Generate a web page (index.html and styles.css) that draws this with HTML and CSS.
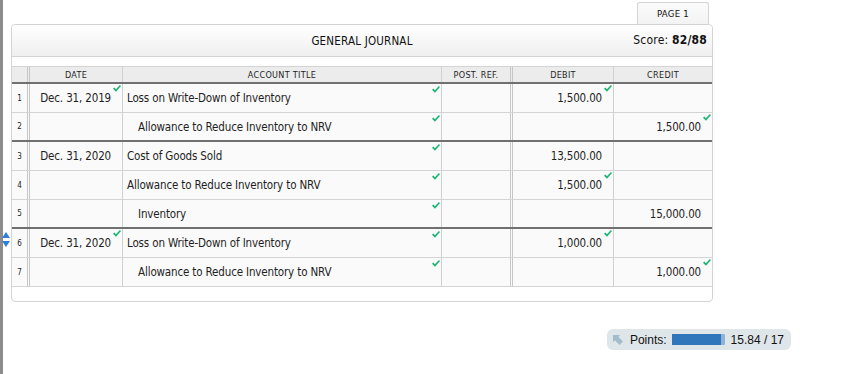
FILE: index.html
```html
<!DOCTYPE html>
<html>
<head>
<meta charset="utf-8">
<link rel="stylesheet" href="styles.css">
</head>
<body>
<div class="frame">
  <div class="tabs"><div class="tab">PAGE 1</div></div>
  <div class="panel">
    <div class="panel-head">
      <div class="title">GENERAL JOURNAL</div>
      <div class="score">Score: <b>82/88</b></div>
    </div>
    <div class="gap"></div>
    <div class="journal">
      <div class="row head">
        <div class="cell num"></div>
        <div class="cell date dbl">DATE</div>
        <div class="cell acct">ACCOUNT TITLE</div>
        <div class="cell ref">POST. REF.</div>
        <div class="cell amt dbl">DEBIT</div>
        <div class="cell amt">CREDIT</div>
      </div>

      <div class="row">
        <div class="cell num">1</div>
        <div class="cell date dbl">Dec. 31, 2019<svg class="chk" viewBox="0 0 8 7"><path d="M0 3.8 L1.4 2.6 L2.9 4.2 L6.9 0 L8 1 L3 6.8 Z"/></svg></div>
        <div class="cell acct">Loss on Write-Down of Inventory<svg class="chk" viewBox="0 0 8 7"><path d="M0 3.8 L1.4 2.6 L2.9 4.2 L6.9 0 L8 1 L3 6.8 Z"/></svg></div>
        <div class="cell ref"></div>
        <div class="cell amt dbl">1,500.00<svg class="chk" viewBox="0 0 8 7"><path d="M0 3.8 L1.4 2.6 L2.9 4.2 L6.9 0 L8 1 L3 6.8 Z"/></svg></div>
        <div class="cell amt"></div>
      </div>
      <div class="row grp-end">
        <div class="cell num">2</div>
        <div class="cell date dbl"></div>
        <div class="cell acct ind">Allowance to Reduce Inventory to NRV<svg class="chk" viewBox="0 0 8 7"><path d="M0 3.8 L1.4 2.6 L2.9 4.2 L6.9 0 L8 1 L3 6.8 Z"/></svg></div>
        <div class="cell ref"></div>
        <div class="cell amt dbl"></div>
        <div class="cell amt">1,500.00<svg class="chk" viewBox="0 0 8 7"><path d="M0 3.8 L1.4 2.6 L2.9 4.2 L6.9 0 L8 1 L3 6.8 Z"/></svg></div>
      </div>
      <div class="row">
        <div class="cell num">3</div>
        <div class="cell date dbl">Dec. 31, 2020</div>
        <div class="cell acct">Cost of Goods Sold<svg class="chk" viewBox="0 0 8 7"><path d="M0 3.8 L1.4 2.6 L2.9 4.2 L6.9 0 L8 1 L3 6.8 Z"/></svg></div>
        <div class="cell ref"></div>
        <div class="cell amt dbl">13,500.00</div>
        <div class="cell amt"></div>
      </div>
      <div class="row">
        <div class="cell num">4</div>
        <div class="cell date dbl"></div>
        <div class="cell acct">Allowance to Reduce Inventory to NRV<svg class="chk" viewBox="0 0 8 7"><path d="M0 3.8 L1.4 2.6 L2.9 4.2 L6.9 0 L8 1 L3 6.8 Z"/></svg></div>
        <div class="cell ref"></div>
        <div class="cell amt dbl">1,500.00<svg class="chk" viewBox="0 0 8 7"><path d="M0 3.8 L1.4 2.6 L2.9 4.2 L6.9 0 L8 1 L3 6.8 Z"/></svg></div>
        <div class="cell amt"></div>
      </div>
      <div class="row grp-end">
        <div class="cell num">5</div>
        <div class="cell date dbl"></div>
        <div class="cell acct ind">Inventory<svg class="chk" viewBox="0 0 8 7"><path d="M0 3.8 L1.4 2.6 L2.9 4.2 L6.9 0 L8 1 L3 6.8 Z"/></svg></div>
        <div class="cell ref"></div>
        <div class="cell amt dbl"></div>
        <div class="cell amt">15,000.00</div>
      </div>
      <div class="row">
        <div class="cell num"><svg class="spin" viewBox="0 0 8 15"><path d="M4 0 L8 6 L0 6 Z"/><path d="M4 15 L8 9 L0 9 Z"/></svg>6</div>
        <div class="cell date dbl">Dec. 31, 2020<svg class="chk" viewBox="0 0 8 7"><path d="M0 3.8 L1.4 2.6 L2.9 4.2 L6.9 0 L8 1 L3 6.8 Z"/></svg></div>
        <div class="cell acct">Loss on Write-Down of Inventory<svg class="chk" viewBox="0 0 8 7"><path d="M0 3.8 L1.4 2.6 L2.9 4.2 L6.9 0 L8 1 L3 6.8 Z"/></svg></div>
        <div class="cell ref"></div>
        <div class="cell amt dbl">1,000.00<svg class="chk" viewBox="0 0 8 7"><path d="M0 3.8 L1.4 2.6 L2.9 4.2 L6.9 0 L8 1 L3 6.8 Z"/></svg></div>
        <div class="cell amt"></div>
      </div>
      <div class="row">
        <div class="cell num">7</div>
        <div class="cell date dbl"></div>
        <div class="cell acct ind">Allowance to Reduce Inventory to NRV<svg class="chk" viewBox="0 0 8 7"><path d="M0 3.8 L1.4 2.6 L2.9 4.2 L6.9 0 L8 1 L3 6.8 Z"/></svg></div>
        <div class="cell ref"></div>
        <div class="cell amt dbl"></div>
        <div class="cell amt">1,000.00<svg class="chk" viewBox="0 0 8 7"><path d="M0 3.8 L1.4 2.6 L2.9 4.2 L6.9 0 L8 1 L3 6.8 Z"/></svg></div>
      </div>
    </div>
    <div class="foot"></div>
  </div>
  <div class="points-row">
    <div class="points">
      <svg class="arrow" viewBox="0 0 9 9"><path d="M0 0 H6.5 L4.8 1.7 L9 5.9 L5.9 9 L1.7 4.8 L0 6.5 Z"/></svg>
      <span class="plabel">Points:</span>
      <span class="bar"><span class="fill" style="width:93%"></span></span>
      <span class="pval">15.84 / 17</span>
    </div>
  </div>
</div>
</body>
</html>
```
FILE: styles.css
```css
html, body {
  margin: 0;
  padding: 0;
  background: #fff;
}
body {
  font-family: "DejaVu Sans Condensed", "DejaVu Sans", sans-serif;
  color: #1e1e1e;
}
.frame {
  min-height: 374px;
  box-sizing: border-box;
  border-left: 3px solid #8c8c8c;
  padding: 2px 0 0 8px;
  width: 864px;
}
.tabs {
  width: 702px;
  display: flex;
  justify-content: flex-end;
}
.tab {
  width: 72px;
  height: 22px;
  margin-right: 4px;
  box-sizing: border-box;
  border: 1px solid #d4d4d4;
  border-bottom: none;
  border-radius: 3px 3px 0 0;
  background: linear-gradient(#fbfbfb, #f3f3f3);
  font-size: 9.5px;
  letter-spacing: 0.3px;
  text-align: center;
  line-height: 22px;
  color: #111;
}
.panel {
  width: 702px;
  box-sizing: border-box;
  border: 1px solid #d4d4d4;
  border-radius: 4px;
  background: #fff;
}
.panel-head {
  height: 31px;
  display: flex;
  align-items: center;
  justify-content: center;
  position: relative;
  background: linear-gradient(#ffffff, #efefef);
  border-bottom: 1px solid #d4d4d4;
  border-radius: 4px 4px 0 0;
}
.title {
  font-size: 11.5px;
  letter-spacing: 0.2px;
  color: #111;
}
.score {
  position: absolute;
  right: 5px;
  top: 0;
  line-height: 31px;
  font-size: 12px;
  letter-spacing: 0.2px;
  color: #111;
}
.score b { font-weight: bold; }
.gap {
  height: 9px;
  border-bottom: 1px solid #d4d4d4;
}
.row {
  display: grid;
  grid-template-columns: 15px 95px 319px 69px 103px 99px;
  height: 29px;
  box-sizing: border-box;
  border-bottom: 1px solid #d4d4d4;
  background: #fafafa;
}
.row.grp-end { border-bottom: 2px solid #707070; }
.row.head {
  height: 17px;
  border-bottom: 2px solid #707070;
  background: #ececec;
}
.cell {
  box-sizing: border-box;
  border-left: 1px solid #d0d0d0;
  position: relative;
  display: flex;
  align-items: center;
  white-space: nowrap;
  font-size: 11.5px;
  letter-spacing: -0.15px;
}
.cell.num { border-left: none; justify-content: center; font-size: 8px; letter-spacing: 0; }
.cell.dbl { border-left: 3px double #c6c6c6; }
.head .cell {
  justify-content: center;
  font-size: 9px;
  letter-spacing: 0.3px;
  padding: 0 !important;
}
.date { justify-content: flex-end; padding-right: 11px; }
.acct { padding-left: 4px; }
.acct.ind { padding-left: 15px; }
.amt { justify-content: flex-end; padding-right: 11px; }
.chk {
  position: absolute;
  right: 1px;
  top: 1px;
  width: 8px;
  height: 7px;
  fill: #1db474;
}
.acct .chk { right: 1px; top: 2px; }
.spin {
  position: absolute;
  left: -10px;
  top: 3px;
  width: 8px;
  height: 15px;
  fill: #2f7fd6;
}
.foot {
  height: 14px;
}
.points-row {
  width: 780px;
  display: flex;
  justify-content: flex-end;
  margin-top: 27px;
}
.points {
  display: flex;
  align-items: center;
  height: 21px;
  padding: 0 7px 0 6px;
  background: #dfe6e9;
  border-radius: 6px;
  font-family: "Liberation Sans", Arial, sans-serif;
  font-size: 12px;
  color: #111;
}
.arrow {
  width: 10px;
  height: 10px;
  fill: #a3bccd;
  margin-right: 7px;
}
.plabel { margin-right: 5px; }
.bar {
  width: 53px;
  height: 11px;
  background: #8fb3d8;
  border-radius: 1px;
  margin-right: 6px;
  display: flex;
}
.fill {
  display: block;
  height: 100%;
  background: #2f76bb;
}
```
